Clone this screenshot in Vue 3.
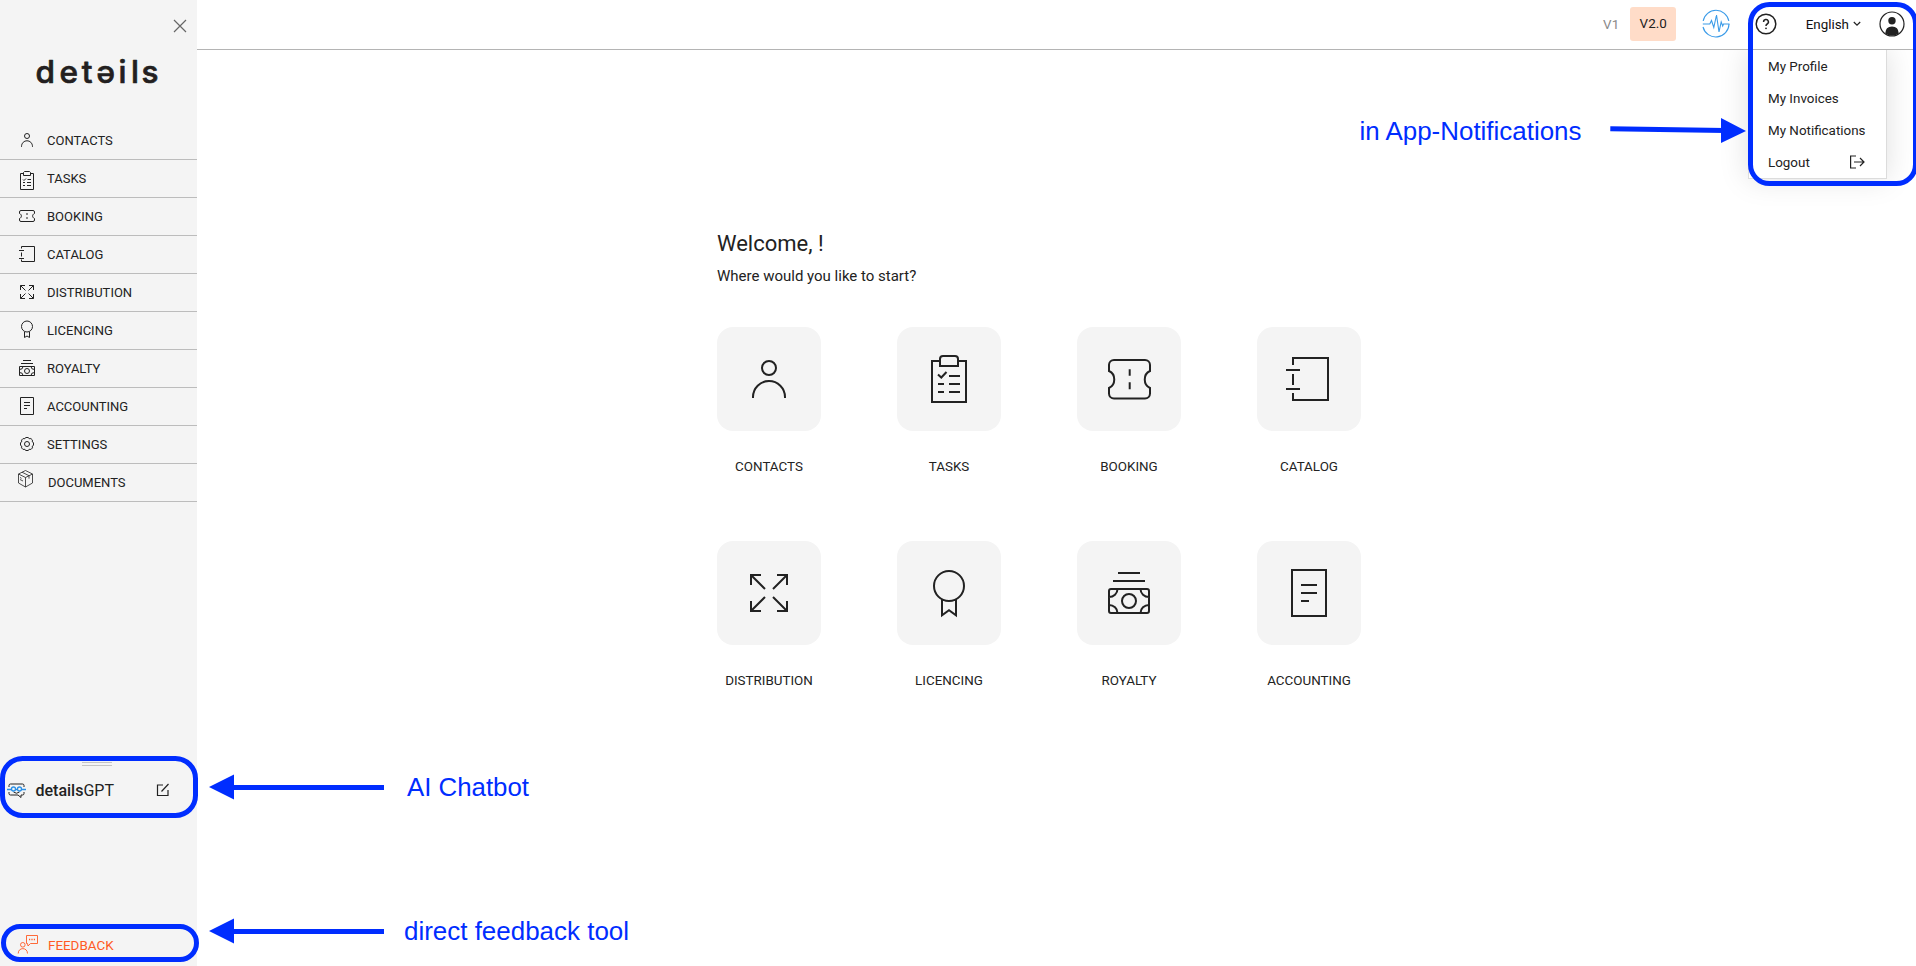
<script setup>
const nav = [
  { label: 'CONTACTS', d: 'M9.5 7a2.5 2.5 0 1 0 5 0a2.5 2.5 0 1 0-5 0M6.5 17.8c0-8 11-8 11 0' },
  { label: 'TASKS', d: 'M8.5 6.5h-3v16h13v-16h-3M8.5 8.5v-3l1-1h5l1 1v3zM8 12.5l1 1 2-2M12.5 12.5H16M8 15.5h2M12 15.5h4M8 18.5h2M12 18.5h4' },
  { label: 'BOOKING', d: 'M6 5.5h12q1.5 0 1.500 1.500v1.500c-2.500 1-2.500 4 0 5v1.500q0 1.500-1.500 1.500H6q-1.500 0-1.500-1.500v-1.500c2.500-1 2.500-4 0-5V7q0-1.500 1.500-1.500zM12 8v2M12 12v2' },
  { label: 'CATALOG', d: 'M6.5 5.500v-2h13v15h-13v-2M4 7.500h5M4 15.500h5M6.500 9.500v4' },
  { label: 'DISTRIBUTION', d: 'M10 4.500H5.500V9M5.500 4.500l5 5M14 4.500h4.500V9M18.500 4.500l-5 5M10 17.500H5.500V13M5.500 17.500l5-5M14 17.500h4.500V13M18.500 17.500l-5-5' },
  { label: 'LICENCING', d: 'M6.500 7.500a5.500 5.500 0 1 0 11 0a5.500 5.500 0 1 0-11 0M9.500 13v5.500l2.500-1.500 2.500 1.500V13' },
  { label: 'ROYALTY', d: 'M8 3.500h8M6 6.500h12M4.500 9.500h15v9h-15zM9.500 14a2.500 2.500 0 1 0 5 0a2.500 2.500 0 1 0-5 0M8 9.500q0 3-3.500 3M16 9.500q0 3 3.500 3M8 18.500q0-3-3.500-3M16 18.500q0-3 3.500-3' },
  { label: 'ACCOUNTING', d: 'M5.500 2.500h13v17h-13zM9 7.500h6M9 10.500h6M9 13.500h3' },
  { label: 'SETTINGS', d: 'M10.300 5.300l.4-.8h2.600l.4.8 1.200.5 1-.3 1.600 1.600-.3 1 .5 1.200.8.400v2.600l-.8.400-.5 1.200.3 1-1.600 1.600-1-.3-1.200.5-.4.800h-2.600l-.4-.8-1.200-.5-1 .3-1.600-1.600.3-1-.5-1.200-.8-.4V9.700l.8-.4.5-1.200-.3-1 1.600-1.600 1 .3zM9.500 11a2.500 2.500 0 1 0 5 0a2.500 2.500 0 1 0-5 0' },
  { label: 'DOCUMENTS', thin: true, d: 'M10.500-.5l7 3.500v9l-7 4-7-4V3zM3.500 3l7 3.500 7-3.500M10.500 6.500V16M7 1.200l7 3.500v3M5 8.500l3 1.500M5 6.500l1.500.8' },
]

const tiles = [
  { label: 'CONTACTS', d: 'M17 13a7 7 0 1 0 14 0a7 7 0 1 0-14 0M8 43v-1a16 16 0 0 1 32 0v1' },
  { label: 'TASKS', d: 'M15 6H7v41h34V6h-8M15 11V4q0-3 3-3h12q3 0 3 3v7zM13 19.500l3.300 3 5.200-5.500M24 21h11M13 29h6M24 29h11M13 37h6M24 37h11' },
  { label: 'BOOKING', d: 'M9 5h31a5 5 0 0 1 5 5v6c-7 3-7 14 0 17v5.500a5 5 0 0 1-5 5H9a5 5 0 0 1-5-5V33c7-3 7-14 0-17v-6a5 5 0 0 1 5-5zM24.700 14.300v6.400M24.700 27.300v7' },
  { label: 'CATALOG', d: 'M8 10V3h35v42H8v-7M8 19v11M1 15h14M1 34h14' },
  { label: 'DISTRIBUTION', d: 'M16 6H6v10M6 6l14 14M32 6h10v10M42 6L28 20M16 42H6V32M6 42l14-14M32 42h10V32M42 42L28 28' },
  { label: 'LICENCING', d: 'M9 17a15 15 0 1 0 30 0a15 15 0 1 0-30 0M17 30v16.200l7-5 7 5V30' },
  { label: 'ROYALTY', d: 'M13 4h22M8 12h32M6 20h36q2 0 2 2v20q0 2-2 2H6q-2 0-2-2V22q0-2 2-2zM17 32a7 7 0 1 0 14 0a7 7 0 1 0-14 0M12.500 20a8.500 8 0 0 1-8.500 8M35.500 20a8.500 8 0 0 0 8.500 8M12.500 44a8.500 8 0 0 0-8.500-8M35.500 44a8.500 8 0 0 1 8.500-8' },
  { label: 'ACCOUNTING', d: 'M7 1h34v46H7zM16 16h16M16 24h16M16 32h8' },
]

const menu = ['My Profile', 'My Invoices', 'My Notifications', 'Logout']
</script>

<template>
  <div class="page">
    <aside class="sidebar">
      <div class="brand">
        <svg class="close" width="14" height="14" viewBox="0 0 14 14"><path d="M1 1l12 12M13 1L1 13" /></svg>
        <svg class="logo" width="130" height="40" viewBox="0 0 130 40">
          <text y="29.500" x="2.600 26.600 48.800 63.600 85.600 98 108.600">detəils</text>
        </svg>
      </div>
      <nav>
        <a v-for="n in nav" :key="n.label" class="row" :class="{ thin: n.thin }">
          <svg width="24" height="24" viewBox="0 0 24 24"><path :d="n.d" /></svg>
          <span>{{ n.label }}</span>
        </a>
      </nav>
      <div class="gpt">
        <div class="grip"></div>
        <div class="gpt-row">
          <svg class="bot" width="20" height="16" viewBox="0 0 20 16">
            <path class="ink" d="M2 4V2.500Q2 1 3.500 1h12Q17 1 17 2.500V4M2 9v1.500Q2 12 3.500 12H11l3 2.500v-2.500h1.500q1.500 0 1.500-1.500V9M6.500 9q3 2.500 6 0" />
            <path class="blue" d="M0 6.500h4M15 6.500h4M9 6.500h1M4.500 6a2 2 0 1 0 4 0a2 2 0 1 0-4 0M10.500 6a2 2 0 1 0 4 0a2 2 0 1 0-4 0" />
          </svg>
          <span class="gpt-name"><b>details</b>GPT</span>
          <svg class="edit" width="14" height="14" viewBox="0 0 14 14"><path d="M7 2H1.500v10.500H12V7M5.500 8.500L12.500 1" /></svg>
        </div>
      </div>
      <div class="feedback">
        <svg width="22" height="20" viewBox="0 0 22 20">
          <path d="M3.500 9.800a2.300 2.300 0 1 0 4.600 0a2.300 2.300 0 1 0-4.600 0M1.200 18.500c0-6.500 9.300-6.500 9.300 0M10 .500h10.500v8h-7L11 11l-.5-2.500H9.500v-8z" />
          <path class="dots" d="M12 4.500h1.200M14.400 4.500h1.200M16.800 4.500H18" />
        </svg>
        <span>FEEDBACK</span>
      </div>
    </aside>

    <section class="content">
      <header class="topbar">
        <span class="v1">V1</span>
        <span class="v2">V2.0</span>
        <svg class="pulse" width="28" height="28" viewBox="0 0 28 28">
          <path d="M.800 14h7l1.700-3.500 2.300 7L14.500 5l2.500 17 2.200-10 1.500 4 .8-2h6" />
          <path d="M1.200 11a13 13 0 0 1 25.600 0M1 17a13.200 13.200 0 0 0 26-3" />
        </svg>
        <svg class="help" width="22" height="22" viewBox="0 0 22 22">
          <circle cx="11" cy="11" r="9.800" /><path d="M8.600 9a2.400 2.400 0 1 1 3.600 2q-1.200.7-1.200 2" /><circle class="dot" cx="11" cy="15.300" r=".9" />
        </svg>
        <span class="lang">English</span>
        <svg class="chev" width="8" height="6" viewBox="0 0 8 6"><path d="M.8 1l3.200 3.200L7.200 1" /></svg>
        <svg class="avatar" width="26" height="26" viewBox="0 0 26 26">
          <circle class="ring" cx="13" cy="13" r="12" /><circle cx="13" cy="9.800" r="3.700" /><path d="M6.200 22.500q.3-7 6.800-7t6.800 7q-6.800 4.500-13.600 0z" />
        </svg>
        <div class="menu">
          <a v-for="m in menu" :key="m">
            <span>{{ m }}</span>
            <svg v-if="m === 'Logout'" width="16" height="14" viewBox="0 0 16 14"><path d="M7 1H1.600v12H7M5 7h10M11 3l4 4-4 4" /></svg>
          </a>
        </div>
      </header>

      <main class="start">
        <h1>Welcome, !</h1>
        <p>Where would you like to start?</p>
        <div class="grid">
          <div v-for="t in tiles" :key="t.label" class="cell">
            <div class="tile"><svg width="48" height="48" viewBox="0 0 48 48"><path :d="t.d" /></svg></div>
            <span>{{ t.label }}</span>
          </div>
        </div>
      </main>
    </section>

    <svg class="notes" width="1916" height="966" viewBox="0 0 1916 966">
      <rect x="2.500" y="758.500" width="193" height="57" rx="20" />
      <rect x="3.500" y="926.500" width="193" height="33" rx="16.500" />
      <rect x="1750.500" y="4.500" width="165" height="179" rx="19" />
      <path class="line" d="M230 787.500H384M230 931.500H384M1610.300 128.800L1725 130.600" />
      <path class="head" d="M209 787l25-12.500v25zM209 931l25-12.500v25zM1746 131l-25-13v25z" />
      <text x="1359.500" y="140" textLength="222" lengthAdjust="spacingAndGlyphs">in App-Notifications</text>
      <text x="407" y="796" textLength="122" lengthAdjust="spacingAndGlyphs">AI Chatbot</text>
      <text x="404" y="940" textLength="225" lengthAdjust="spacingAndGlyphs">direct feedback tool</text>
    </svg>
  </div>
</template>

<style>
html, body { margin: 0; overflow: hidden; }
</style>

<style scoped>
.page {
  position: relative;
  display: flex;
  width: 1916px;
  height: 966px;
  overflow: hidden;
  background: #fff;
  color: #222;
  font-family: Roboto, "Liberation Sans", sans-serif;
}
svg { display: block; flex: none; overflow: visible; fill: none; stroke: #222; }
.sidebar {
  display: flex;
  flex-direction: column;
  width: 197px;
  height: 966px;
  background: #f4f4f4;
}
.brand { display: flex; flex-direction: column; height: 122px; }
.close { align-self: flex-end; margin: 18.500px 10.500px 0 0; stroke: #666; stroke-width: 1.2; }
.logo { margin: 20.500px 0 0 33px; }
.logo text {
  font: 500 31.500px Inter, "Open Sans", sans-serif;
  fill: #231f20;
  stroke: #231f20;
  stroke-width: .7;
  stroke-linejoin: round;
}
.row {
  display: flex;
  align-items: center;
  box-sizing: border-box;
  height: 38px;
  padding-left: 15px;
  border-bottom: 1px solid #bcbcbc;
  font-size: 13px;
}
.row svg { margin: 1px 8px 0 0; }
.row.thin svg { margin-right: 9px; stroke-width: .8; }
.gpt { height: 62px; margin-top: 253px; display: flex; flex-direction: column; }
.grip {
  align-self: center;
  box-sizing: border-box;
  width: 30px;
  height: 4px;
  margin: 7px 0 0 -3px;
  border: solid #c4c4c4;
  border-width: 1px 0;
}
.gpt-row { display: flex; align-items: center; height: 26px; margin-top: 11px; padding-left: 7px; font-size: 16px; }
.bot { margin: 1px 8.500px 0 0; }
.bot .blue { stroke: #2a8fe6; stroke-width: 1.3; }
.gpt-name b { font-weight: 500; }
.edit { margin-left: 42.500px; stroke-width: 1.2; }
.feedback { display: flex; align-items: center; height: 24px; margin-top: 116px; padding-left: 17px; color: #ff5a24; font-size: 13.400px; }
.feedback svg { stroke: #ff5a24; stroke-width: .9; margin: -1px 9px 0 0; }
.feedback .dots { stroke-width: 1.3; }

.content { flex: 1; display: flex; flex-direction: column; }
.topbar {
  position: relative;
  display: flex;
  align-items: center;
  justify-content: flex-end;
  box-sizing: border-box;
  height: 50px;
  padding: 0 11px 1px 0;
  border-bottom: 1px solid #b4b4b4;
  font-size: 13.400px;
}
.v1 { color: #8a8a8a; margin-right: 11px; }
.v2 { width: 46px; height: 34px; line-height: 34px; text-align: center; background: #ffdcc8; border-radius: 3px; margin-right: 26px; }
.pulse { stroke: #3a9be8; stroke-width: 1.1; margin-right: 25px; }
.help { stroke-width: 1.500; margin-right: 28.500px; }
.help .dot { fill: #222; stroke: none; }
.lang { color: #111; margin-right: 4px; }
.chev { stroke-width: 1.2; margin-right: 18px; }
.avatar { fill: #222; stroke: none; }
.avatar .ring { fill: none; stroke: #222; stroke-width: 1.2; }
.menu {
  position: absolute;
  top: 50px;
  right: 29px;
  box-sizing: border-box;
  width: 139px;
  height: 129px;
  border: 1px solid #dcdcdc;
  border-top: 0;
  background: #fff;
  box-shadow: 0 0 28px rgba(0, 0, 0, .13);
  clip-path: inset(0 -50px -50px -50px);
}
.menu a { display: flex; align-items: center; justify-content: space-between; height: 32px; padding: 0 21px 0 19px; white-space: nowrap; }
.menu svg { stroke-width: 1.2; }

.start { margin: 178px 0 0 520px; }
h1 { margin: 0; font-size: 22px; font-weight: 400; line-height: 32px; }
p { margin: 4px 0 0; font-size: 15px; line-height: 24px; }
.grid { display: grid; grid-template-columns: repeat(4, 104px); column-gap: 76px; margin-top: 39px; }
.cell { display: flex; flex-direction: column; align-items: center; height: 214px; font-size: 13.400px; }
.tile { display: flex; align-items: center; justify-content: center; width: 104px; height: 104px; border-radius: 16px; background: #f4f4f4; }
.tile svg { stroke-width: 2; }
.cell span { margin-top: 28px; line-height: 16px; }

.notes { position: absolute; inset: 0; pointer-events: none; stroke: none; }
.notes rect, .notes .line { stroke: #002dff; stroke-width: 5; }
.notes .head, .notes text { fill: #002dff; }
.notes text { font: 26px "Liberation Sans", Arial, sans-serif; }
</style>
